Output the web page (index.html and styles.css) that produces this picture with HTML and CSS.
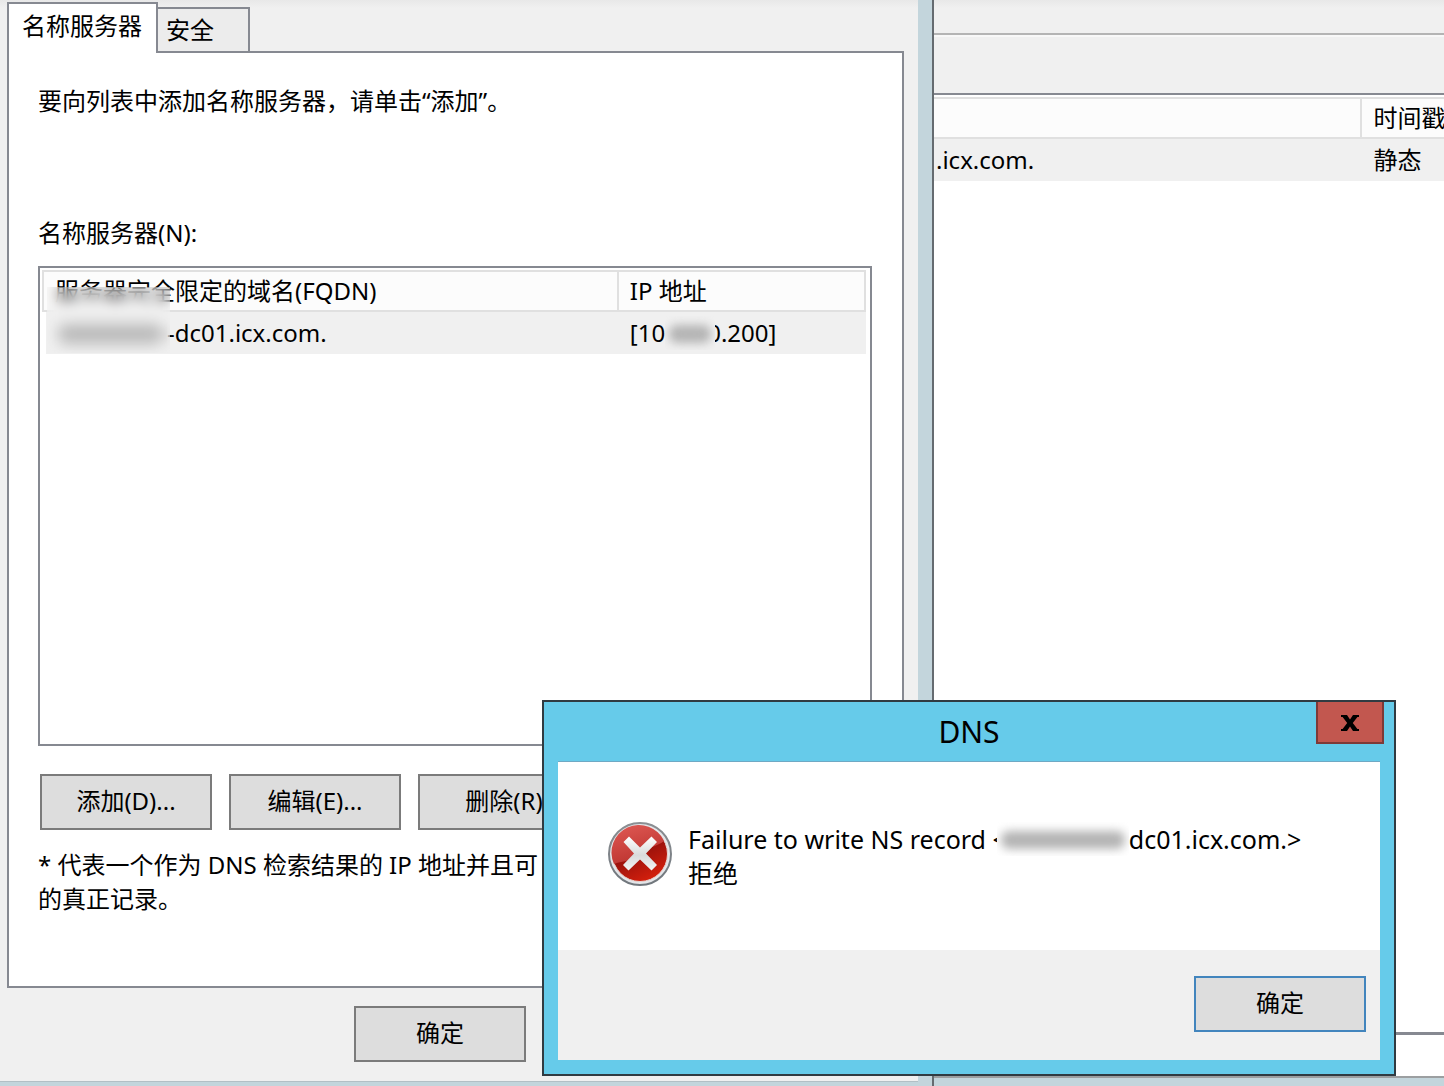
FILE: index.html
```html
<!DOCTYPE html>
<html lang="zh-CN">
<head>
    <meta charset="UTF-8">
    <meta name="viewport" content="width=device-width, initial-scale=1.0">
    <title>DNS</title>
    <link rel="stylesheet" href="styles.css">
</head>
<body>
    <!-- Zone properties -->
    <div class="properties-window">
        <div class="properties-body">
            <div class="tabs" role="tablist">
                <button class="tab active" role="tab" aria-selected="true">名称服务器</button>
                <button class="tab" role="tab" aria-selected="false">安全</button>
            </div>

            <div class="tab-panel" role="tabpanel">
                <p class="hint">要向列表中添加名称服务器，请单击“添加”。</p>
                <p class="list-label" id="servers-label">名称服务器(N):</p>

                <div class="list-box">
                    <table class="list" aria-labelledby="servers-label">
                        <thead>
                            <tr>
                                <th class="col-name">服务器完全限定的域名(FQDN)</th>
                                <th>IP 地址</th>
                            </tr>
                        </thead>
                        <tbody>
                            <tr>
                                <td><span class="redacted name"></span>-dc01.icx.com.</td>
                                <td>[10<span class="redacted ip"></span>0.200]</td>
                            </tr>
                        </tbody>
                    </table>
                    <div class="mask"></div>
                </div>

                <div class="list-actions">
                    <button class="btn">添加(D)...</button>
                    <button class="btn">编辑(E)...</button>
                    <button class="btn">删除(R)</button>
                </div>

                <p class="note">* 代表一个作为 DNS 检索结果的 IP 地址并且可<br>的真正记录。</p>
            </div>

            <div class="window-actions">
                <button class="btn">确定</button>
            </div>
        </div>
    </div>

    <!-- DNS console behind -->
    <div class="console-window">
        <div class="menu-bar"></div>
        <div class="tool-bar"></div>
        <div class="records">
            <table class="list">
                <thead>
                    <tr>
                        <th class="col-data"></th>
                        <th>时间戳</th>
                    </tr>
                </thead>
                <tbody>
                    <tr>
                        <td>.icx.com.</td>
                        <td>静态</td>
                    </tr>
                </tbody>
            </table>
        </div>
        <div class="status-bar"></div>
    </div>

    <!-- Error message -->
    <div class="dialog" role="alertdialog" aria-labelledby="dialog-title">
        <h1 class="dialog-title" id="dialog-title">DNS</h1>
        <button class="close" aria-label="关闭">
            <svg width="18" height="16" viewBox="0 0 18 16">
                <path d="M0 0H6L9 4.4L12 0H18V2H16.4L11.8 8L16.4 14H18V16H12L9 11.6L6 16H0V14H1.6L6.2 8L1.6 2H0Z"/>
            </svg>
        </button>
        <div class="dialog-content">
            <div class="message">
                <svg class="error-icon" width="64" height="64" viewBox="0 0 64 64">
                    <defs>
                        <linearGradient id="rim" x1="0" y1="0" x2="0" y2="1">
                            <stop offset="0" stop-color="#8b8f93"/>
                            <stop offset="1" stop-color="#70767c"/>
                        </linearGradient>
                        <linearGradient id="red" x1="0.2" y1="0" x2="0.7" y2="1">
                            <stop offset="0" stop-color="#a3120d"/>
                            <stop offset="0.5" stop-color="#9c120c"/>
                            <stop offset="1" stop-color="#d8200c"/>
                        </linearGradient>
                        <linearGradient id="gloss" x1="0" y1="0" x2="0.4" y2="1">
                            <stop offset="0" stop-color="#e05a55"/>
                            <stop offset="1" stop-color="#bd3430"/>
                        </linearGradient>
                        <linearGradient id="cross" x1="0" y1="0" x2="0" y2="1">
                            <stop offset="0" stop-color="#ffffff"/>
                            <stop offset="0.55" stop-color="#d9dadb"/>
                            <stop offset="1" stop-color="#f4f4f4"/>
                        </linearGradient>
                    </defs>
                    <circle cx="32" cy="32" r="31" fill="#e3e5e8" stroke="url(#rim)" stroke-width="2"/>
                    <circle cx="32" cy="32" r="27.5" fill="url(#red)" stroke="#e9d4d0" stroke-width="1"/>
                    <path d="M6 42A27.5 27.5 0 0 1 56 19C50 24 42 24 33 32C24 40 16 38 6 42Z" fill="url(#gloss)"/>
                    <path d="M21 14.5L32 25.5L43.5 14.5L49 20L38 31.5L49 43L43.5 48.5L32 37.5L20.5 48.5L15 43L26 31.5L15.5 20Z" fill="url(#cross)"/>
                </svg>
                <p class="message-text">Failure to write NS record &lt;<span class="redacted host"></span>dc01.icx.com.&gt;<br>拒绝</p>
            </div>
            <div class="dialog-actions">
                <button class="btn default">确定</button>
            </div>
        </div>
    </div>
</body>
</html>
```

FILE: styles.css
```css
* {
    margin: 0;
    padding: 0;
    box-sizing: border-box;
}

:root {
    --face: #f0f0f0;
    --button: #dddddd;
    --frame: #c3d5dc;
    --frame-line: #656b70;
    --border: #868991;
    --header-line: #e0e0e0;
    --accent: #66cbea;
}

body {
    position: relative;
    height: 100vh;
    display: grid;
    grid-template-columns: 934fr 510fr;
    overflow: hidden;
    background-color: var(--frame);
    color: #000000;
    font-family: 'Noto Sans', 'Noto Sans CJK SC', sans-serif;
    font-size: 24px;
    line-height: 34px;
}

button {
    font: inherit;
    color: inherit;
}

/* Properties window */
.properties-window {
    display: flex;
    padding: 0 14px 4px 0;
    border-right: 2px solid var(--frame-line);
}

.properties-body {
    flex: 1;
    display: flex;
    flex-direction: column;
    padding: 2px 14px 0 7px;
    background: linear-gradient(#e8e8e8, var(--face) 8px);
    border-bottom: 1px solid #b2bfc5;
}

.tabs {
    display: flex;
    align-items: flex-end;
}

.tab {
    height: 44px;
    padding: 0 34px 0 8px;
    border: 2px solid var(--border);
    border-bottom: none;
    border-left: none;
    background-color: #ececec;
}

.tab.active {
    position: relative;
    height: 51px;
    margin-bottom: -2px;
    padding: 0 14px 6px 13px;
    border-left: 2px solid var(--border);
    background-color: #ffffff;
}

.tab-panel {
    flex: 1;
    display: flex;
    flex-direction: column;
    padding: 31px 30px 70px 29px;
    border: 2px solid var(--border);
    background-color: #ffffff;
}

.list-label {
    margin: 98px 0 16px;
}

.list-box {
    position: relative;
    flex: 1;
    padding: 2px 4px 0 2px;
    border: 2px solid var(--border);
}

/* Lists */
.list {
    width: 100%;
    border-collapse: separate;
    border-spacing: 0;
    table-layout: fixed;
}

.list th,
.list td {
    height: 42px;
    padding: 0 11px;
    font-weight: normal;
    text-align: left;
    white-space: nowrap;
}

.list th {
    border: 2px solid var(--header-line);
    border-left: none;
    background-color: #fcfcfc;
}

.list th:first-child {
    border-left: 2px solid var(--header-line);
}

.list td {
    background-color: var(--face);
}

.list td:first-child {
    padding-left: 8px;
    border-left: 4px solid #ffffff;
}

.col-name {
    width: 70%;
}

.col-data {
    width: 84%;
}

/* Blurred out names */
.mask {
    position: absolute;
    top: 19px;
    left: 7px;
    width: 123px;
    height: 66px;
    background-color: rgba(240, 240, 240, 0.3);
    backdrop-filter: blur(6px);
}

.redacted {
    display: inline-block;
    position: relative;
    height: 34px;
    vertical-align: top;
    overflow: hidden;
    background-color: var(--face);
}

.redacted::after {
    content: '';
    position: absolute;
    inset: 9px 4px 7px;
    border-radius: 8px;
    background-color: #b4b4b4;
    filter: blur(5px);
}

.redacted.name {
    width: 113px;
}

.redacted.name::after {
    background-color: #9c9c9c;
}

.redacted.ip {
    width: 50px;
    margin-right: -8px;
}

.redacted.host {
    width: 132px;
    margin-left: -10px;
    background-color: #ffffff;
}

/* Buttons */
.btn {
    width: 172px;
    height: 56px;
    padding-bottom: 2px;
    border: 2px solid #7b7b7b;
    background-color: var(--button);
}

.btn.default {
    border-color: #4285bd;
}

.list-actions {
    display: flex;
    gap: 17px;
    padding: 28px 0 18px 2px;
}

.window-actions {
    padding: 18px 0 19px 347px;
}

/* Console window */
.console-window {
    display: flex;
    flex-direction: column;
    padding-bottom: 8px;
    overflow: hidden;
}

.menu-bar {
    height: 35px;
    border-bottom: 2px solid #b4b4b4;
    background: linear-gradient(#e8e8e8, var(--face) 8px);
}

.tool-bar {
    height: 58px;
    border-top: 2px solid #f8f8f8;
    background-color: var(--face);
}

.records {
    flex: 1;
    padding-top: 2px;
    border-top: 2px solid var(--border);
    border-bottom: 3px solid var(--border);
    background-color: #ffffff;
}

.records .list th:first-child {
    border-left: none;
}

.records .list th:last-child {
    border-right: none;
}

.records .list td:first-child {
    padding-left: 2px;
    border-left: none;
}

.status-bar {
    height: 43px;
    border-bottom: 2px solid #9c9fa1;
    background-color: #ffffff;
}

/* Error dialog */
.dialog {
    position: absolute;
    right: 48px;
    bottom: 10px;
    width: 854px;
    padding: 0 14px 14px;
    border: 2px solid #303b42;
    background-color: var(--accent);
}

.dialog-title {
    height: 59px;
    font-size: 30px;
    font-weight: normal;
    line-height: 59px;
    text-align: center;
}

.close {
    position: absolute;
    top: 0;
    right: 10px;
    width: 68px;
    height: 42px;
    border: 2px solid #7d3a38;
    border-top: none;
    background-color: #c2574f;
}

.dialog-content {
    border-top: 1px solid #6fa9c4;
    background-color: #ffffff;
}

.message {
    display: flex;
    gap: 16px;
    padding: 60px 50px;
}

.message-text {
    font-size: 25px;
    white-space: nowrap;
}

.dialog-actions {
    display: flex;
    justify-content: flex-end;
    padding: 26px 14px 28px;
    background-color: var(--face);
}
```
